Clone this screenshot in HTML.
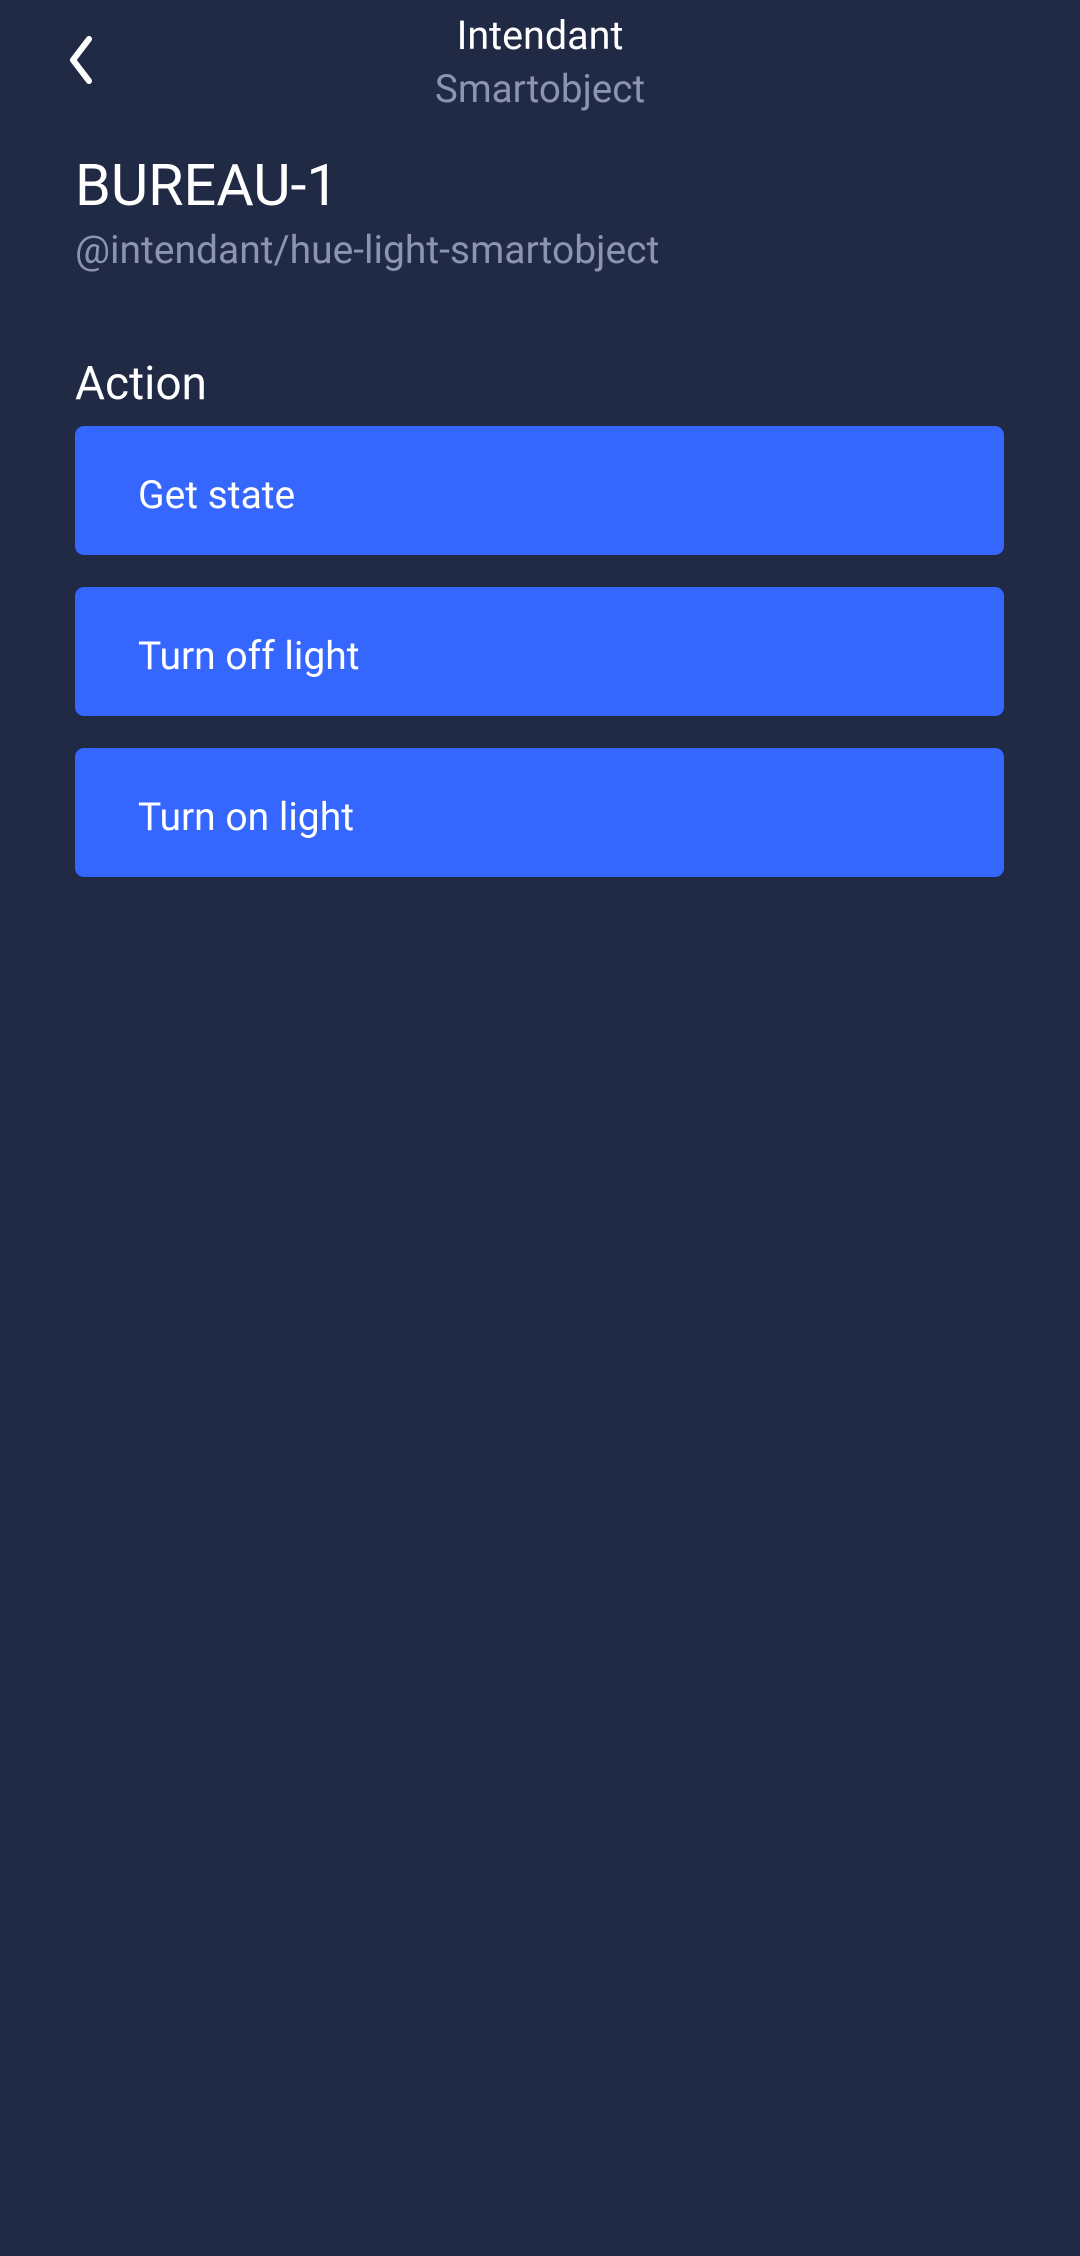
<!DOCTYPE html>
<html><head><meta charset="utf-8"><style>
*{margin:0;padding:0;box-sizing:border-box}
html,body{width:1080px;height:2256px;background:#212a44;font-family:"Roboto","Liberation Sans",sans-serif;overflow:hidden}
.t{position:absolute;white-space:nowrap;line-height:1}
.btn{position:absolute;left:75px;width:929px;height:129px;background:#3566fe;border-radius:9px;color:#fff;font-size:39px;padding-left:63px;line-height:138px}
</style></head><body>
<svg style="position:absolute;left:64px;top:34px" width="36" height="52" viewBox="0 0 36 52"><path d="M25 5 L9 26 L25 47" fill="none" stroke="#fff" stroke-width="6" stroke-linecap="round" stroke-linejoin="round"/></svg>
<div class="t" style="left:0;width:1080px;text-align:center;top:16px;font-size:39.5px;color:#fff">Intendant</div>
<div class="t" style="left:0;width:1080px;text-align:center;top:71px;font-size:38.6px;color:#8b95b2">Smartobject</div>
<div class="t" style="left:75px;top:158px;font-size:57.5px;color:#fff">BUREAU-1</div>
<div class="t" style="left:75px;top:231px;font-size:39px;color:#8b95b2">@intendant/hue-light-smartobject</div>
<div class="t" style="left:75px;top:361px;font-size:46px;color:#fff">Action</div>
<div class="btn" style="top:426px">Get state</div>
<div class="btn" style="top:587px">Turn off light</div>
<div class="btn" style="top:748px">Turn on light</div>
</body></html>
